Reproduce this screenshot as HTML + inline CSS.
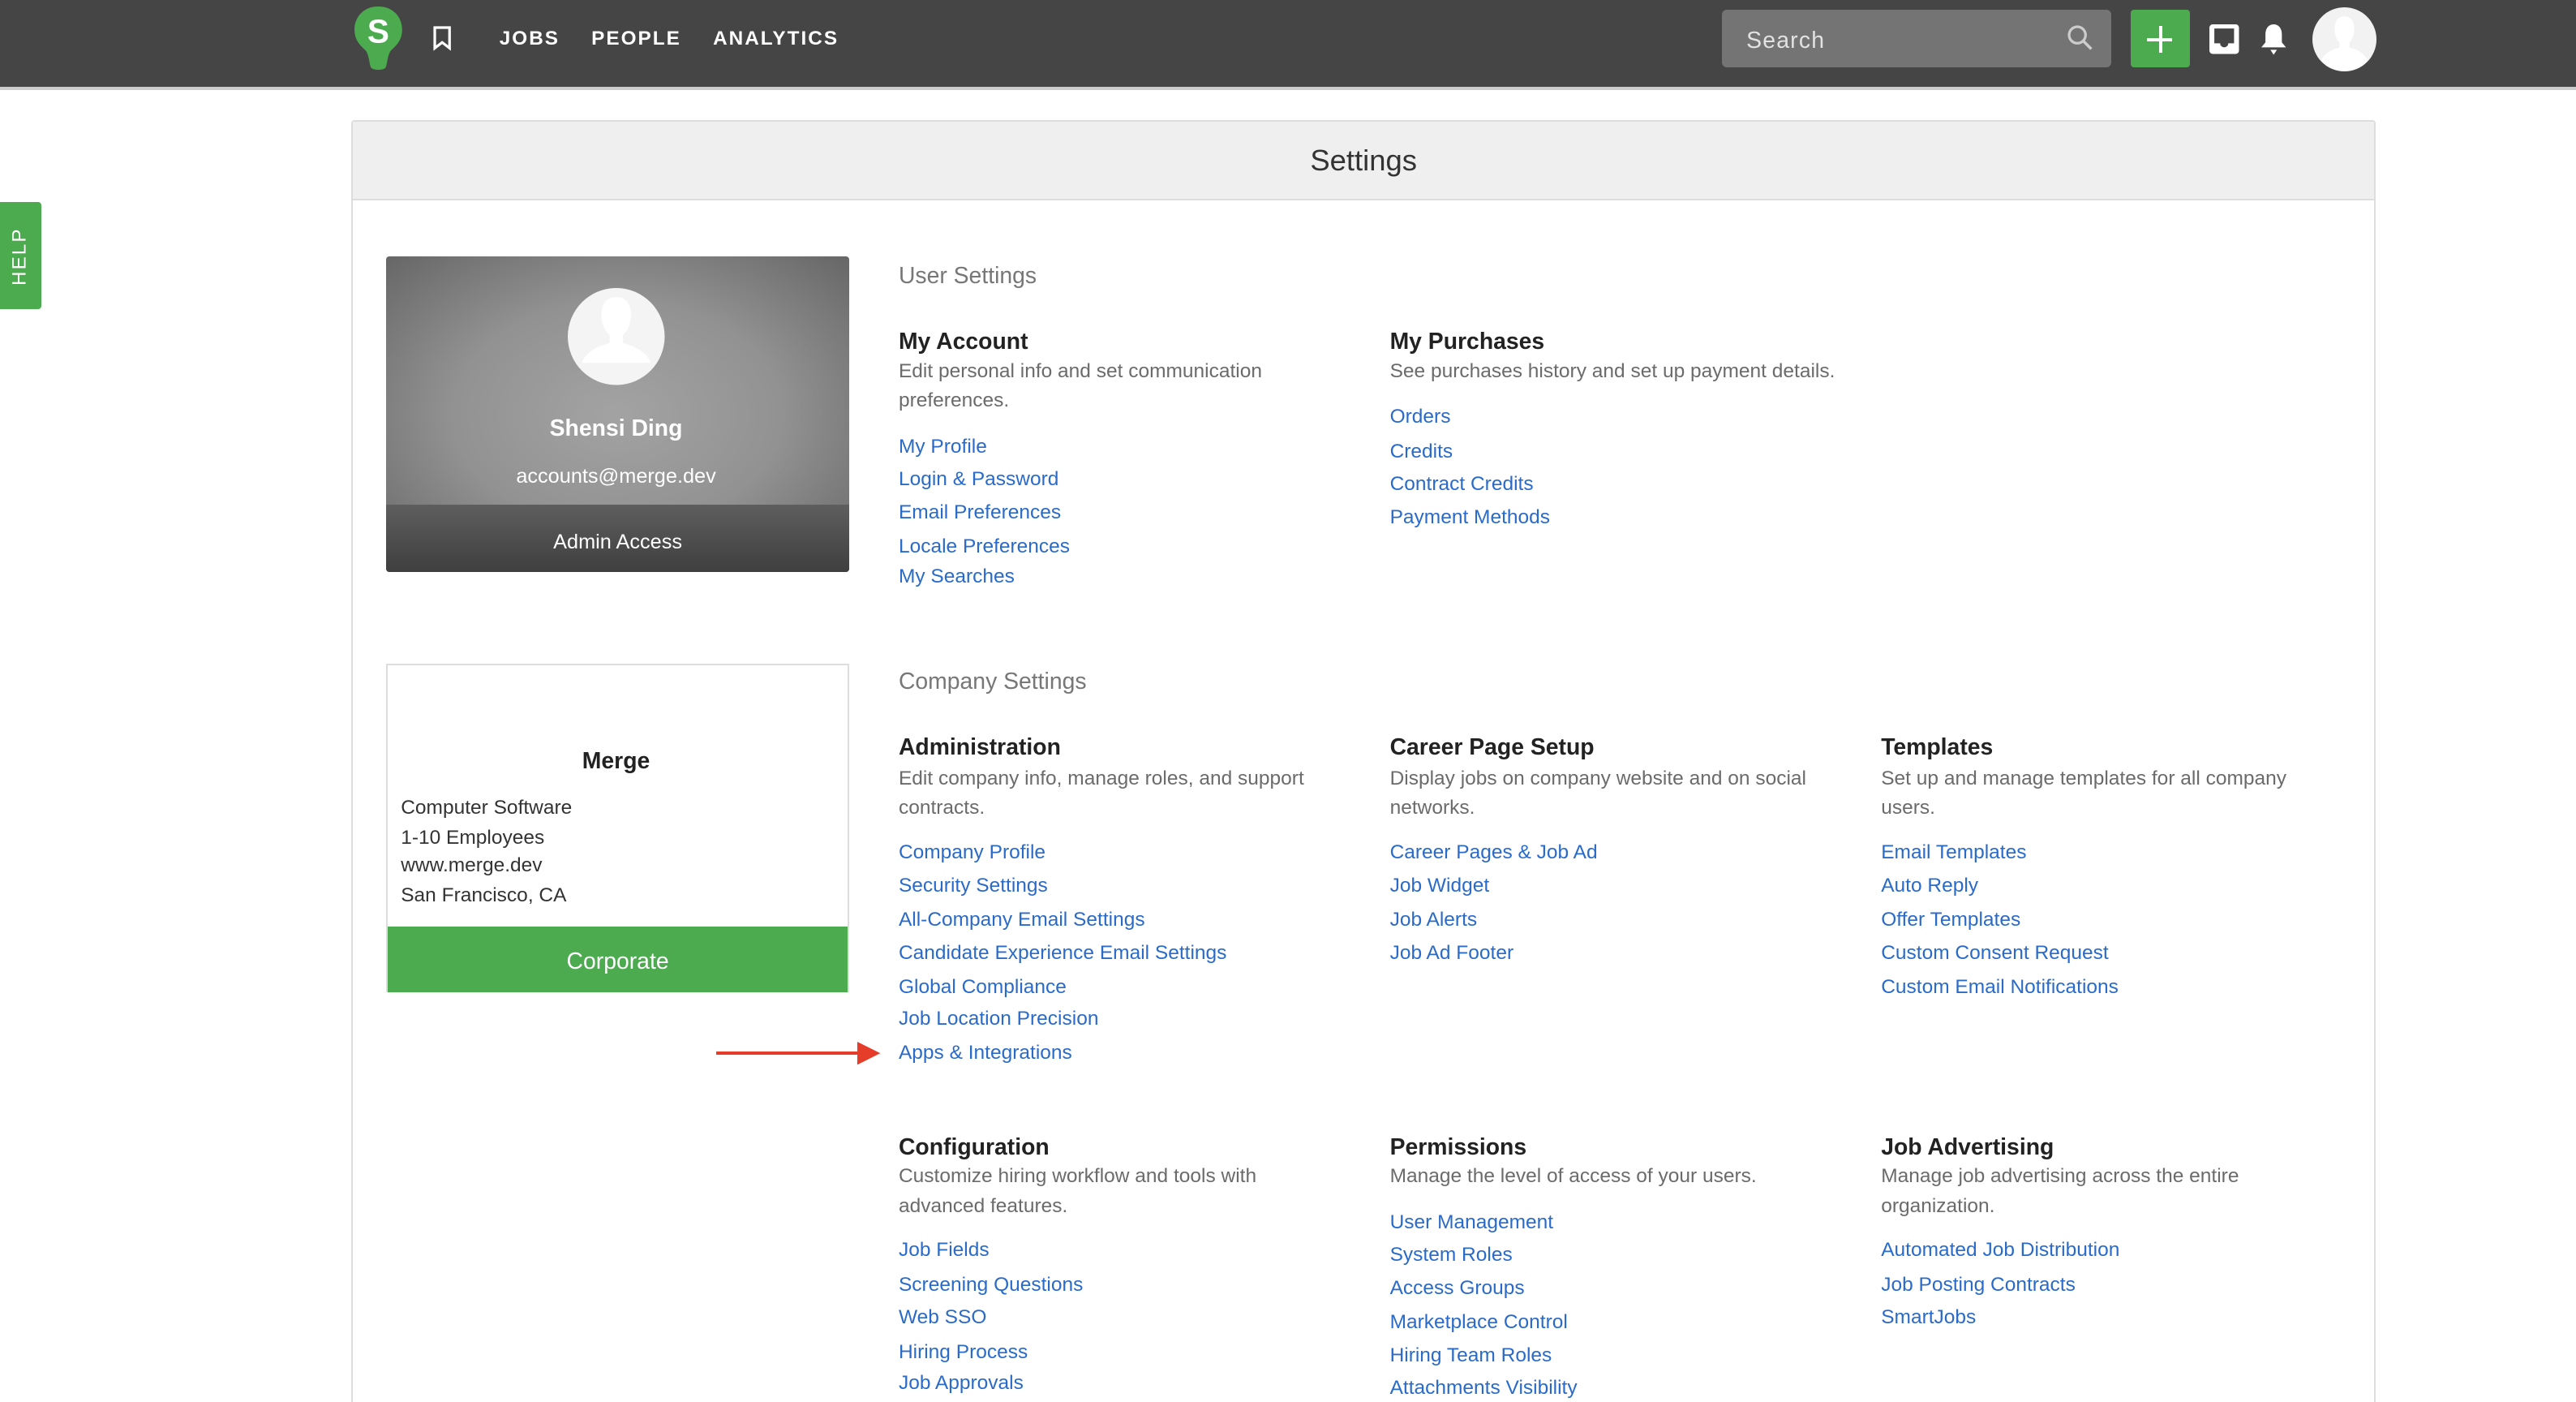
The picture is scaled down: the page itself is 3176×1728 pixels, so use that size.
<!DOCTYPE html>
<html><head><meta charset="utf-8"><style>
html,body{margin:0;padding:0;background:#fff;overflow:hidden}
#w{zoom:2.0255;width:1568px;height:853px;position:relative;font-family:"Liberation Sans",Arial,sans-serif;overflow:hidden}
.a{position:absolute;white-space:nowrap;line-height:16px;margin-top:1px}
.l{color:#2a6bc9;font-size:12.1px}
.h{color:#222;font-size:14px;font-weight:bold}
.d{color:#6b6b6b;font-size:12.1px}
.s{color:#777;font-size:14px}
.n{color:#fff;font-size:12px;letter-spacing:1px;font-weight:bold;top:15px}
</style></head><body><div id="w">
<div style="position:absolute;left:0;top:0;width:1568px;height:53px;background:#454545"></div>
<div style="position:absolute;left:0;top:53px;width:1568px;height:2px;background:#ccc"></div>
<svg style="position:absolute;left:214px;top:3px" width="33" height="40" viewBox="0 0 33 40"><path d="M16.5 1C7 1 2 8 2 15c0 7 4 10 7 13 2 3 2 8 3 10 1 2 8 2 9 0 1-2 1-7 3-10 3-3 7-6 7-13 0-7-5-14-14.5-14z" fill="#4caa4f"/><text x="16.5" y="23" fill="#fff" font-size="20" font-weight="bold" text-anchor="middle" font-family="Liberation Sans">S</text></svg>
<svg style="position:absolute;left:263px;top:16px" width="12" height="15" viewBox="0 0 12 15"><path d="M1.5 1h9v12.5L6 10l-4.5 3.5z" fill="none" stroke="#fff" stroke-width="1.6"/></svg>
<div class="a n" style="left:304px">JOBS</div>
<div class="a n" style="left:360px">PEOPLE</div>
<div class="a n" style="left:434px">ANALYTICS</div>
<div style="position:absolute;left:1048px;top:6px;width:237px;height:35px;background:#747474;border-radius:3px"></div>
<div class="a" style="left:1063px;top:16px;color:#e2e2e2;font-size:14px;letter-spacing:.6px">Search</div>
<svg style="position:absolute;left:1258px;top:15px" width="16" height="16" viewBox="0 0 16 16"><circle cx="6.5" cy="6.5" r="5" fill="none" stroke="#ccc" stroke-width="1.6"/><path d="M10 10l5 5" stroke="#ccc" stroke-width="1.8"/></svg>
<div style="position:absolute;left:1297px;top:6px;width:36px;height:35px;background:#4caa4f;border-radius:2px"></div>
<div style="position:absolute;left:1307px;top:23px;width:15px;height:2px;background:#fff"></div>
<div style="position:absolute;left:1314px;top:16px;width:2px;height:16px;background:#fff"></div>
<svg style="position:absolute;left:1344px;top:14px" width="20" height="20" viewBox="0 0 20 20"><rect x="1" y="1" width="18" height="18" rx="2" fill="#fff"/><path d="M4 3.5v9h3.5a2.5 2.5 0 0 0 5 0H16v-9z" fill="#454545"/></svg>
<svg style="position:absolute;left:1375px;top:14px" width="18" height="20" viewBox="0 0 18 20"><path d="M9 1c-3 0-5 2.5-5 6v5l-2.5 3h15L14 12V7c0-3.5-2-6-5-6z" fill="#fff"/><path d="M7 16.5h4L9 19.5z" fill="#fff"/></svg>
<svg style="position:absolute;left:1407px;top:4px" width="40" height="40" viewBox="0 0 40 40"><ellipse cx="20" cy="20" rx="19.5" ry="19.5" fill="#f2f2f2"/><path d="M20 6c-4 0-6 3-6 8 0 4 2 7 3 8v3c-5 1-10 4-11 8 3 4 8 6 14 6s11-2 14-6c-1-4-6-7-11-8v-3c1-1 3-4 3-8 0-5-2-8-6-8z" fill="#fff"/></svg>
<div style="position:absolute;left:0;top:123px;width:25px;height:65px;background:#4caa4f;border-radius:0 2px 2px 0"></div>
<div class="a" style="left:-8px;top:147px;transform:rotate(-90deg);color:#fff;font-size:12px;letter-spacing:1px;width:40px;text-align:center">HELP</div>
<div style="position:absolute;left:214px;top:73px;width:1230px;height:800px;border:1px solid #ddd;border-radius:2px"></div>
<div style="position:absolute;left:215px;top:74px;width:1230px;height:47px;background:#efefef;border-bottom:1px solid #ddd"></div>
<div class="a" style="left:215px;width:1230px;text-align:center;top:88px;font-size:18px;line-height:18px;color:#333">Settings</div>
<div style="position:absolute;left:235px;top:156px;width:282px;height:192px;border-radius:2px;background:radial-gradient(ellipse at 50% 50%,#a3a3a3 0%,#929292 50%,#666 100%)"></div>
<div style="position:absolute;left:235px;top:307px;width:282px;height:41px;background:linear-gradient(#5e5e5e,#3f3f3f);border-radius:0 0 2px 2px"></div>
<svg style="position:absolute;left:345px;top:175px" width="60" height="60" viewBox="0 0 60 60"><ellipse cx="30" cy="30" rx="29.5" ry="29.5" fill="#f4f4f4"/><path d="M30 6c-6 0-9 4-9 11 0 6 3 11 5 12v5c-8 2-15 6-17 12h42c-2-6-9-10-17-12v-5c2-1 5-6 5-12 0-7-3-11-9-11z" fill="#fff"/></svg>
<div class="a" style="left:235px;width:280px;text-align:center;top:252px;color:#fff;font-size:14px;font-weight:bold">Shensi Ding</div>
<div class="a" style="left:235px;width:280px;text-align:center;top:281px;color:#fff;font-size:12.5px">accounts@merge.dev</div>
<div class="a" style="left:235px;width:282px;text-align:center;top:321px;color:#fff;font-size:12.5px">Admin Access</div>
<div style="position:absolute;left:235px;top:404px;width:280px;height:198px;border:1px solid #ddd"></div>
<div style="position:absolute;left:236px;top:564px;width:280px;height:40px;background:#4caa4f"></div>
<div class="a" style="left:235px;width:280px;text-align:center;top:454px;color:#222;font-size:14px;font-weight:bold">Merge</div>
<div class="a" style="left:244px;top:483px;color:#333;font-size:12.1px">Computer Software</div>
<div class="a" style="left:244px;top:501px;color:#333;font-size:12.1px">1-10 Employees</div>
<div class="a" style="left:244px;top:518px;color:#333;font-size:12.1px">www.merge.dev</div>
<div class="a" style="left:244px;top:536px;color:#333;font-size:12.1px">San Francisco, CA</div>
<div class="a" style="left:236px;width:280px;text-align:center;top:576px;color:#fff;font-size:14px">Corporate</div>
<div style="position:absolute;left:436px;top:640px;width:88px;height:2px;background:#e53d2a"></div>
<svg style="position:absolute;left:522px;top:634px" width="14" height="14"><path d="M0 0l14 7L0 14z" fill="#e53d2a"/></svg>

<div class="a s" style="left:547px;top:159px">User Settings</div>
<div class="a h" style="left:547px;top:199px">My Account</div>
<div class="a d" style="left:547px;top:217px">Edit personal info and set communication</div>
<div class="a d" style="left:547px;top:235px">preferences.</div>
<div class="a l" style="left:547px;top:263px">My Profile</div>
<div class="a l" style="left:547px;top:283px">Login &amp; Password</div>
<div class="a l" style="left:547px;top:303px">Email Preferences</div>
<div class="a l" style="left:547px;top:324px">Locale Preferences</div>
<div class="a l" style="left:547px;top:342px">My Searches</div>
<div class="a h" style="left:846px;top:199px">My Purchases</div>
<div class="a d" style="left:846px;top:217px">See purchases history and set up payment details.</div>
<div class="a l" style="left:846px;top:245px">Orders</div>
<div class="a l" style="left:846px;top:266px">Credits</div>
<div class="a l" style="left:846px;top:286px">Contract Credits</div>
<div class="a l" style="left:846px;top:306px">Payment Methods</div>

<div class="a s" style="left:547px;top:406px">Company Settings</div>
<div class="a h" style="left:547px;top:446px">Administration</div>
<div class="a d" style="left:547px;top:465px">Edit company info, manage roles, and support</div>
<div class="a d" style="left:547px;top:483px">contracts.</div>
<div class="a l" style="left:547px;top:510px">Company Profile</div>
<div class="a l" style="left:547px;top:530px">Security Settings</div>
<div class="a l" style="left:547px;top:551px">All-Company Email Settings</div>
<div class="a l" style="left:547px;top:571px">Candidate Experience Email Settings</div>
<div class="a l" style="left:547px;top:592px">Global Compliance</div>
<div class="a l" style="left:547px;top:611px">Job Location Precision</div>
<div class="a l" style="left:547px;top:632px">Apps &amp; Integrations</div>
<div class="a h" style="left:846px;top:446px">Career Page Setup</div>
<div class="a d" style="left:846px;top:465px">Display jobs on company website and on social</div>
<div class="a d" style="left:846px;top:483px">networks.</div>
<div class="a l" style="left:846px;top:510px">Career Pages &amp; Job Ad</div>
<div class="a l" style="left:846px;top:530px">Job Widget</div>
<div class="a l" style="left:846px;top:551px">Job Alerts</div>
<div class="a l" style="left:846px;top:571px">Job Ad Footer</div>
<div class="a h" style="left:1145px;top:446px">Templates</div>
<div class="a d" style="left:1145px;top:465px">Set up and manage templates for all company</div>
<div class="a d" style="left:1145px;top:483px">users.</div>
<div class="a l" style="left:1145px;top:510px">Email Templates</div>
<div class="a l" style="left:1145px;top:530px">Auto Reply</div>
<div class="a l" style="left:1145px;top:551px">Offer Templates</div>
<div class="a l" style="left:1145px;top:571px">Custom Consent Request</div>
<div class="a l" style="left:1145px;top:592px">Custom Email Notifications</div>

<div class="a h" style="left:547px;top:689px">Configuration</div>
<div class="a d" style="left:547px;top:707px">Customize hiring workflow and tools with</div>
<div class="a d" style="left:547px;top:725px">advanced features.</div>
<div class="a l" style="left:547px;top:752px">Job Fields</div>
<div class="a l" style="left:547px;top:773px">Screening Questions</div>
<div class="a l" style="left:547px;top:793px">Web SSO</div>
<div class="a l" style="left:547px;top:814px">Hiring Process</div>
<div class="a l" style="left:547px;top:833px">Job Approvals</div>
<div class="a h" style="left:846px;top:689px">Permissions</div>
<div class="a d" style="left:846px;top:707px">Manage the level of access of your users.</div>
<div class="a l" style="left:846px;top:735px">User Management</div>
<div class="a l" style="left:846px;top:755px">System Roles</div>
<div class="a l" style="left:846px;top:775px">Access Groups</div>
<div class="a l" style="left:846px;top:796px">Marketplace Control</div>
<div class="a l" style="left:846px;top:816px">Hiring Team Roles</div>
<div class="a l" style="left:846px;top:836px">Attachments Visibility</div>
<div class="a h" style="left:1145px;top:689px">Job Advertising</div>
<div class="a d" style="left:1145px;top:707px">Manage job advertising across the entire</div>
<div class="a d" style="left:1145px;top:725px">organization.</div>
<div class="a l" style="left:1145px;top:752px">Automated Job Distribution</div>
<div class="a l" style="left:1145px;top:773px">Job Posting Contracts</div>
<div class="a l" style="left:1145px;top:793px">SmartJobs</div>
</div></body></html>
